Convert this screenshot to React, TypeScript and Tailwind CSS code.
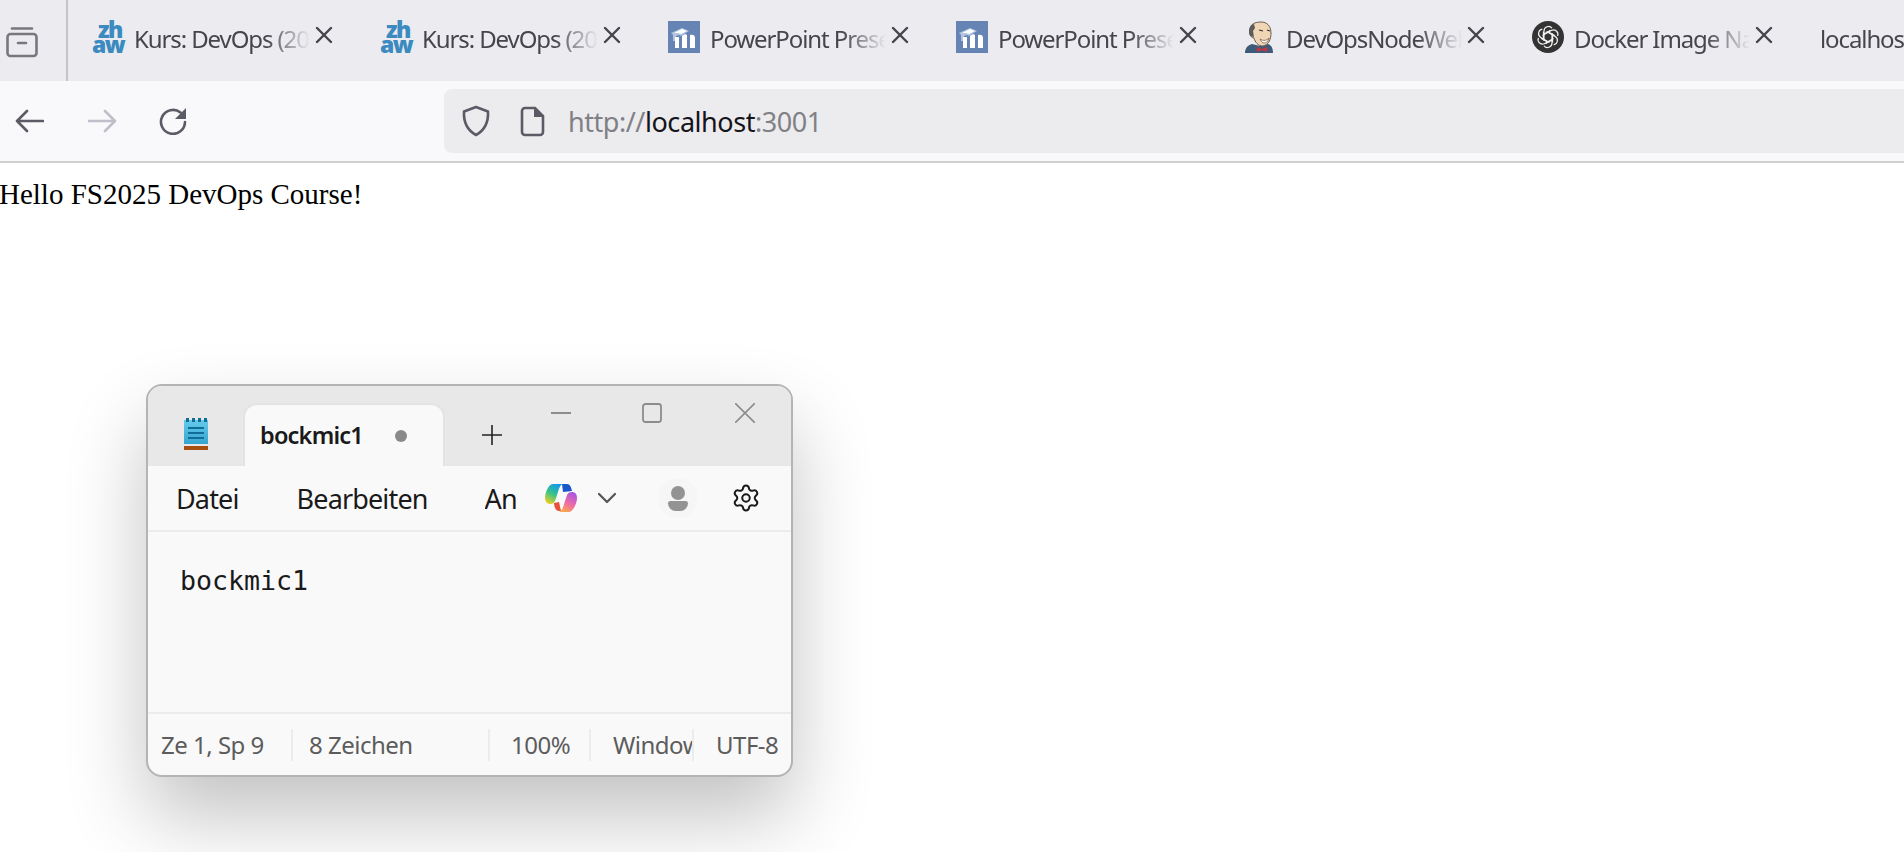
import { ReactNode } from 'react'
import { Settings, X, ChevronDown } from 'lucide-react'

const ui = { fontFamily: '"Noto Sans", sans-serif' }

function ZhawIcon() {
  return (
    <div className="w-8 h-8 flex flex-col items-center justify-center text-[#3b8ac0] font-extrabold text-[23px] leading-[15px] tracking-[-1.5px]" style={{ fontFamily: '"Open Sans", sans-serif' }}>
      <span className="pl-1">zh</span>
      <span>aw</span>
    </div>
  )
}

function MoodleIcon() {
  return (
    <svg viewBox="0 0 32 32" className="w-8 h-8">
      <rect width="32" height="32" fill="#6583b3" />
      <path d="M3 12l11-5 7 3-8 5-2-1-3 1v5H5v-6z" fill="#b3c5df" />
      <path d="M6 12l8-4 5 2-6 3-3-1z" fill="#fff" />
      <path d="M7 27V16h4v11zM14 27V15c2-2 4-2 5-1v13zM22 27V14c3-1 5 0 5 3v10z" fill="#fff" />
    </svg>
  )
}

function JenkinsIcon() {
  return (
    <svg viewBox="0 0 32 32" className="w-8 h-8">
      <path d="M1 32c0-5 3-8 7-9l8 2 8-2c3 1 5 4 5 9z" fill="#3d5a78" />
      <path d="M6 9C6 3 11 1 17 1c6 0 10 4 10 11 0 7-3 12-8 13-5 0-8-4-9-8-3 0-5-4-4-8z" fill="#f0d6b5" stroke="#6a5d50" strokeWidth="1" />
      <path d="M6 15C4 10 5 4 10 3l1 4-2 3 1 6z" fill="#5d5c5a" />
      <path d="M15 9l4 1M23 9l3 1" stroke="#333" strokeWidth="1.2" fill="none" />
      <path d="M16 18c3 2 6 2 9-1-1 4-3 5-5 5s-3-2-4-4z" fill="#fff" stroke="#7a5a48" strokeWidth="0.8" />
      <path d="M13 26l5 2 5-2v5l-5-2-5 2z" fill="#c8323a" />
    </svg>
  )
}

function OpenAiIcon() {
  const angles = [0, 60, 120, 180, 240, 300]
  return (
    <svg viewBox="0 0 32 32" className="w-8 h-8">
      <circle cx="16" cy="16" r="16" fill="#333333" />
      <g fill="none" stroke="#f2f2f2" strokeWidth="1.2">
        {angles.map((a) => (
          <path key={a} d="M12 20V10a4.500 4.500 0 0 1 8-2.800M12 13l6.500-3.700" transform={`rotate(${a} 16 16)`} />
        ))}
      </g>
    </svg>
  )
}

function NotepadIcon() {
  return (
    <svg viewBox="0 0 24 32" className="w-6 h-8">
      <defs>
        <linearGradient id="pad" x1="0" y1="0" x2="0" y2="1">
          <stop offset="0" stopColor="#66c9ec" />
          <stop offset="1" stopColor="#35a5cf" />
        </linearGradient>
      </defs>
      <rect x="0" y="2" width="24" height="24" fill="url(#pad)" />
      <path d="M2 0h3v4H2zM8 0h3v4H8zM14 0h3v4h-3zM20 0h3v4h-3z" fill="#0e6f96" />
      <path d="M4 9h16v2H4zM4 14h16v2H4zM4 19h16v2H4z" fill="#0f6d96" />
      <rect x="0" y="28" width="24" height="4" fill="#a8500f" />
    </svg>
  )
}

function CopilotIcon() {
  return (
    <svg viewBox="0 0 32 28" className="w-8 h-7">
      <defs>
        <linearGradient id="cpa" x1="0.7" y1="0" x2="0.2" y2="1">
          <stop offset="0" stopColor="#1398ee" />
          <stop offset="0.5" stopColor="#35c28a" />
          <stop offset="1" stopColor="#f2d01c" />
        </linearGradient>
        <linearGradient id="cpb" x1="0.8" y1="0" x2="0.3" y2="1">
          <stop offset="0" stopColor="#a356e6" />
          <stop offset="0.55" stopColor="#ee6aa8" />
          <stop offset="1" stopColor="#f9a94a" />
        </linearGradient>
      </defs>
      <path d="M17 0h5c3 0 4 3 5 7l-9 1z" fill="#1a55c9" />
      <path d="M8 0h10c-3 1-4 4-5 8l-3 9c-1 2-2 3-5 3-3 0-5-3-5-6C0 8 4 0 8 0z" fill="url(#cpa)" />
      <path d="M9 19l5-1 2 9h-2c-3 0-5-4-5-8z" fill="#e8503a" />
      <path d="M24 28H14c3-1 4-4 5-8l3-9c1-2 2-3 5-3 3 0 5 2 5 6 0 5-4 14-8 14z" fill="url(#cpb)" />
    </svg>
  )
}

function Tab({ icon, title, close = true, fadeAt = 176 }: { icon?: ReactNode; title: string; close?: boolean; fadeAt?: number }) {
  return (
    <div className="w-[288px] shrink-0 flex items-center pl-6 h-8 text-[#45454c] text-[24px] tracking-[-1.1px]" style={ui}>
      {icon && <div className="w-8 h-8 mr-[10px] shrink-0">{icon}</div>}
      <div
        className="overflow-hidden whitespace-nowrap h-9 leading-9 mt-[3px] [mask-image:linear-gradient(to_right,black_75%,transparent_100%)]"
        style={{ width: fadeAt }}
      >
        {title}
      </div>
      {close && <X className="w-[28px] h-[28px] -mt-1 shrink-0 text-[#45454c]" strokeWidth={2.1} />}
    </div>
  )
}

function StatusCell({ width, children, sep = true, pl }: { width: string; children: ReactNode; sep?: boolean; pl: string }) {
  return (
    <div className={`${width} ${pl} ${sep ? 'border-r-2 border-[#ececec]' : ''} h-8 leading-8 overflow-hidden whitespace-nowrap shrink-0`}>
      {children}
    </div>
  )
}

export default function App() {
  return (
    <div className="w-[1904px] h-[852px] overflow-hidden bg-white">
      {/* Browser tabs */}
      <div className="h-[81px] bg-[#ebebf0] flex">
        <div className="w-[68px] h-full border-r-2 border-[#c4c4c8] shrink-0 pl-[6px] pt-[26px]">
          <svg viewBox="0 0 32 32" className="w-8 h-8 text-[#77777e]" fill="none" stroke="currentColor" strokeWidth="2.6">
            <path d="M6 2.500h20" strokeLinecap="round" />
            <rect x="1.500" y="8" width="29" height="22" rx="3" />
            <path d="M12 17h8" strokeLinecap="round" />
          </svg>
        </div>
        <div className="flex pt-[21px] overflow-hidden">
          <Tab icon={<ZhawIcon />} title="Kurs: DevOps (2025)" />
          <Tab icon={<ZhawIcon />} title="Kurs: DevOps (2025)" />
          <Tab icon={<MoodleIcon />} title="PowerPoint Presentation" />
          <Tab icon={<MoodleIcon />} title="PowerPoint Presentation" />
          <Tab icon={<JenkinsIcon />} title="DevOpsNodeWebApp" />
          <Tab icon={<OpenAiIcon />} title="Docker Image Name" />
          <Tab title="localhost:3001" close={false} fadeAt={260} />
        </div>
      </div>

      {/* Toolbar */}
      <div className="h-[82px] bg-[#f9f9fb] border-b-2 border-[#cfcfd1] flex items-center">
        <div className="w-[444px] flex items-center pl-[15px] shrink-0 text-[#5b5b66]">
          <svg viewBox="0 0 29 24" className="w-[29px] h-6" fill="none" stroke="currentColor" strokeWidth="2.6" strokeLinecap="round" strokeLinejoin="round">
            <path d="M28 12H2M12 2L2 12l10 10" />
          </svg>
          <svg viewBox="0 0 29 24" className="w-[29px] h-6 ml-[44px] text-[#bfbfc9]" fill="none" stroke="currentColor" strokeWidth="2.6" strokeLinecap="round" strokeLinejoin="round">
            <path d="M1 12h26M17 2l10 10-10 10" />
          </svg>
          <svg viewBox="0 0 30 28" className="w-[30px] h-7 ml-[41px]">
            <path d="M27 15a12 12 0 1 1-4.500-9.500" fill="none" stroke="currentColor" strokeWidth="2.6" strokeLinecap="round" />
            <path d="M28 1v11H17z" fill="currentColor" />
          </svg>
        </div>
        <div className="flex-1 h-[64px] bg-[#ececef] rounded-l-lg flex items-center pl-[16px] text-[27px] tracking-[-0.45px] text-[#808085]" style={ui}>
          <svg viewBox="0 0 32 32" className="w-8 h-8 text-[#5b5b66] shrink-0" fill="none" stroke="currentColor" strokeWidth="2.6" strokeLinejoin="round">
            <path d="M16 2l12 4.500c.5 10-2 18-12 23.500C6 24.500 3.500 16.500 4 6.500z" />
          </svg>
          <svg viewBox="0 0 32 32" className="w-8 h-8 ml-[24px] text-[#5b5b66] shrink-0">
            <path d="M9 3h10l8 8v16a3 3 0 0 1-3 3H9a3 3 0 0 1-3-3V6a3 3 0 0 1 3-3z" fill="none" stroke="currentColor" strokeWidth="2.600" />
            <path d="M18 3l9 9h-9z" fill="currentColor" />
          </svg>
          <span className="ml-[20px] mt-[2px]">http://<span className="text-[#15141a]">localhost</span>:3001</span>
        </div>
      </div>

      {/* Page body */}
      <p className="-ml-[1px] text-[29px] leading-[32px] text-black mt-[15px]" style={{ fontFamily: '"Liberation Serif", serif' }}>
        Hello FS2025 DevOps Course!
      </p>

      {/* Notepad window */}
      <div
        className="ml-[146px] mt-[174px] w-[647px] h-[393px] rounded-[16px] border-2 border-[#b4b4b4] bg-[#f9f9f9] overflow-hidden flex flex-col shadow-[0_40px_80px_rgba(0,0,0,0.24)]"
        style={ui}
      >
        <div className="h-[80px] bg-[#e8e8e8] flex shrink-0 relative">
          <div className="w-[95px] pl-[36px] pt-[32px] shrink-0">
            <NotepadIcon />
          </div>
          <div className="w-[202px] mt-[17px] h-[63px] bg-[#f9f9f9] border-2 border-b-0 border-[#e3e3e3] rounded-t-[14px] flex items-center pl-[15px] text-[23.5px] font-semibold text-[#1a1a1a] tracking-[-0.8px] shrink-0">
            bockmic1
            <span className="w-3 h-3 rounded-full bg-[#8a8a8a] ml-[32px]" />
          </div>
          <svg viewBox="0 0 20 20" className="w-5 h-5 ml-[37px] mt-[39px] text-[#222]" fill="none" stroke="currentColor" strokeWidth="1.6">
            <path d="M10 0v20M0 10h20" />
          </svg>
          <div className="absolute right-0 top-[17px] flex text-[#8c8c8c]">
            <svg viewBox="0 0 20 20" className="w-5 h-5" fill="none" stroke="currentColor" strokeWidth="1.8">
              <path d="M0 10h20" />
            </svg>
            <svg viewBox="0 0 20 20" className="w-5 h-5 ml-[71px]" fill="none" stroke="currentColor" strokeWidth="1.8">
              <rect x="1" y="1" width="18" height="18" rx="2.500" />
            </svg>
            <svg viewBox="0 0 20 20" className="w-5 h-5 ml-[73px] mr-[36px]" fill="none" stroke="currentColor" strokeWidth="1.6">
              <path d="M0 0l20 20M20 0L0 20" />
            </svg>
          </div>
        </div>

        <div className="h-[66px] border-b-2 border-[#ececec] flex items-center text-[#1a1a1a] text-[27px] tracking-[-0.85px] shrink-0 relative">
          <span className="ml-[28px] mt-[3px]">Datei</span>
          <span className="ml-[58px] mt-[3px]">Bearbeiten</span>
          <span className="ml-[57px] mt-[3px] w-[31px] overflow-hidden whitespace-nowrap">Ansicht</span>
          <div className="absolute right-0 top-0 h-full flex items-center">
            <CopilotIcon />
            <ChevronDown className="w-8 h-8 ml-[14px] text-[#555]" strokeWidth={1.7} />
            <div className="w-10 h-10 rounded-full bg-[#f6f6f6] ml-[35px] flex flex-col items-center justify-center">
              <span className="w-[14px] h-[14px] rounded-full bg-[#939393]" />
              <span className="w-[20px] h-[10px] rounded-b-[10px] rounded-t-[3px] bg-[#939393] mt-[1px]" />
            </div>
            <Settings className="w-[30px] h-[30px] ml-[33px] mr-[30px] text-[#1a1a1a]" strokeWidth={1.6} />
          </div>
        </div>

        <div className="flex-1 pl-[32px] pt-[33px] text-[26.6px] leading-[32px] text-[#1a1a1a]" style={{ fontFamily: '"DejaVu Sans Mono", monospace' }}>
          bockmic1
        </div>

        <div className="h-[63px] border-t-2 border-[#ececec] flex items-center text-[#5c5c5c] text-[24px] tracking-[-0.5px] shrink-0">
          <StatusCell width="w-[145px]" pl="pl-[13px]">Ze 1, Sp 9</StatusCell>
          <StatusCell width="w-[197px]" pl="pl-[16px]">8 Zeichen</StatusCell>
          <StatusCell width="w-[101px]" pl="pl-[21px]">100%</StatusCell>
          <StatusCell width="w-[103px]" pl="pl-[22px]">Windows (CRLF)</StatusCell>
          <StatusCell width="w-[99px]" pl="pl-[22px]" sep={false}>UTF-8</StatusCell>
        </div>
      </div>
    </div>
  )
}
